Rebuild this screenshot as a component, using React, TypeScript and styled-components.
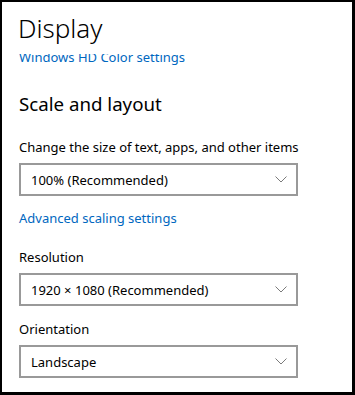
import styled, { createGlobalStyle } from "styled-components"

const GlobalStyle = createGlobalStyle`
    html, body {
        margin: 0;
        padding: 0;
        background: #ffffff;
    }
    body {
        font-family: "Segoe UI", "Noto Sans", "Open Sans", sans-serif;
        color: #000000;
    }
`

type DropdownProps = {
    value: string
}

function Chevron() {
    return (
        <svg width="12" height="7" viewBox="0 0 12 7" fill="none">
            <path d="M0.5 0.5 L6 6 L11.5 0.5" stroke="#7a7a7a" strokeWidth="1" />
        </svg>
    )
}

function Dropdown({ value }: DropdownProps) {
    return (
        <Select>
            <SelectValue>{value}</SelectValue>
            <Chevron />
        </Select>
    )
}

function App() {
    return (
        <>
            <GlobalStyle />
            <Frame>
                <Header>
                    <Title>Display</Title>
                </Header>

                <Viewport>
                    <Content>
                        <Link>Windows HD Color settings</Link>

                        <SectionTitle>Scale and layout</SectionTitle>

                        <Label $top={19}>Change the size of text, apps, and other items</Label>
                        <Dropdown value="100% (Recommended)" />

                        <Link $top={12}>Advanced scaling settings</Link>

                        <Label $top={19}>Resolution</Label>
                        <Dropdown value="1920 × 1080 (Recommended)" />

                        <Label $top={13}>Orientation</Label>
                        <Dropdown value="Landscape" />
                    </Content>
                </Viewport>
            </Frame>
        </>
    )
}

export default App

const Frame = styled.div`
    width: 355px;
    height: 395px;
    box-sizing: border-box;
    border: 2px solid #000000;
    border-right-width: 3px;
    border-bottom-width: 3px;
    background: #ffffff;
    display: flex;
    flex-direction: column;
    overflow: hidden;
`

const Header = styled.div`
    height: 52px;
    flex-shrink: 0;
    padding-left: 16px;
    display: flex;
    align-items: flex-start;
`

const Title = styled.h1`
    margin: 9px 0 0 0;
    font-size: 26px;
    font-weight: 300;
    line-height: 34px;
    letter-spacing: 0;
`

const Viewport = styled.div`
    flex: 1;
    overflow: hidden;
`

const Content = styled.div`
    margin-top: -7px;
    padding: 0 17px;
    display: flex;
    flex-direction: column;
    align-items: flex-start;
`

const Link = styled.a<{ $top?: number }>`
    margin-top: ${(p) => p.$top ?? 0}px;
    font-size: 13px;
    line-height: 20px;
    color: #0067c0;
    cursor: pointer;
`

const SectionTitle = styled.h2`
    margin: 23px 0 0 0;
    font-size: 18.7px;
    font-weight: 400;
    line-height: 28px;
`

const Label = styled.div<{ $top: number }>`
    margin-top: ${(p) => p.$top}px;
    font-size: 13px;
    line-height: 20px;
`

const Select = styled.div`
    margin-top: 6px;
    width: 279px;
    height: 33px;
    box-sizing: border-box;
    border: 2px solid #999999;
    padding: 0 9px 0 10px;
    display: flex;
    align-items: center;
    justify-content: space-between;
`

const SelectValue = styled.span`
    font-size: 13px;
    line-height: 20px;
`
